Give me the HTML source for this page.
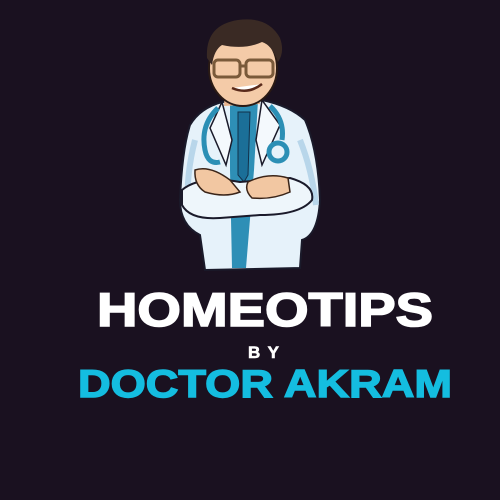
<!DOCTYPE html>
<html><head><meta charset="utf-8"><style>
html,body{margin:0;padding:0;background:#1a1120;width:500px;height:500px;overflow:hidden}
svg{display:block}
</style></head><body>
<svg width="500" height="500" viewBox="0 0 500 500" xmlns="http://www.w3.org/2000/svg">
<rect width="500" height="500" fill="#1a1120"/>
<path d="M190 125 Q200 108 222 102 L262 100 Q290 106 305 120 Q318 150 320 200 Q318 235 302 240 L300 268 L205 270 L200 235 Q180 225 180 200 Q182 150 190 125Z" fill="#e6f2fa" stroke="#1a1a2a" stroke-width="2"/>
<path d="M300 140 Q312 170 316 205" stroke="#b8d6ea" stroke-width="6" fill="none"/>
<path d="M195 140 Q186 175 188 205" stroke="#b8d6ea" stroke-width="6" fill="none"/>
<path d="M230 102 L258 100 L254 170 L246 268 L232 268 L230 170Z" fill="#2e8fb6"/>
<path d="M238 112 L250 112 L248 175 L244 182 L238 175Z" fill="#1b6f98" stroke="#12304a" stroke-width="1"/>
<path d="M222 102 L232 140 L226 165 L210 128Z" fill="#f4f9fd" stroke="#1a1a2a" stroke-width="1.5"/>
<path d="M262 100 L256 140 L262 165 L280 125Z" fill="#f4f9fd" stroke="#1a1a2a" stroke-width="1.5"/>
<path d="M218 108 Q200 125 205 150 Q208 165 220 162" stroke="#2b8fb5" stroke-width="5" fill="none"/>
<path d="M270 106 Q285 120 282 140" stroke="#2b8fb5" stroke-width="5" fill="none"/>
<circle cx="278" cy="152" r="9" fill="none" stroke="#2b8fb5" stroke-width="5"/>
<path d="M182 190 Q200 175 240 182 L290 178 Q315 185 312 200 Q300 215 260 215 L220 218 Q190 220 182 205Z" fill="#eef6fb" stroke="#1a1a2a" stroke-width="2"/>
<path d="M195 170 Q210 165 230 180 L240 192 Q225 198 205 192 Q194 185 195 170Z" fill="#f2c7a2" stroke="#3a2418" stroke-width="1.5"/>
<path d="M248 182 Q268 172 288 178 L290 192 Q272 200 252 198 Q244 190 248 182Z" fill="#f2c7a2" stroke="#3a2418" stroke-width="1.5"/>
<path d="M225 88 L258 88 L260 104 L224 106Z" fill="#e8b48e"/>
<ellipse cx="243" cy="68" rx="34" ry="38" fill="#f4cba8" stroke="#2a1a14" stroke-width="2"/>
<path d="M207 58 Q205 25 238 20 Q268 16 280 38 Q285 52 278 62 Q272 45 262 42 Q245 50 222 45 Q214 50 212 65Z" fill="#3a2a24"/>
<rect x="214" y="60" width="26" height="17" rx="4" fill="none" stroke="#7a5a3a" stroke-width="3"/>
<rect x="246" y="60" width="27" height="17" rx="4" fill="none" stroke="#7a5a3a" stroke-width="3"/>
<path d="M240 66 L246 66" stroke="#7a5a3a" stroke-width="3"/>
<path d="M232 88 Q248 95 262 84" stroke="#5a2a1a" stroke-width="2.5" fill="#fff"/>
<text x="97" y="326" textLength="336" lengthAdjust="spacingAndGlyphs" font-family="Liberation Sans, sans-serif" font-weight="bold" font-size="47" fill="#ffffff" stroke="#ffffff" stroke-width="1.6">HOMEOTIPS</text>
<text x="248" y="358" textLength="31" lengthAdjust="spacing" font-family="Liberation Sans, sans-serif" font-weight="bold" font-size="17" fill="#ffffff" stroke="#ffffff" stroke-width="0.6">B Y</text>
<text x="78" y="397" textLength="374" lengthAdjust="spacingAndGlyphs" font-family="Liberation Sans, sans-serif" font-weight="bold" font-size="39" fill="#14bde0" stroke="#14bde0" stroke-width="1.4">DOCTOR AKRAM</text>
</svg>
</body></html>
